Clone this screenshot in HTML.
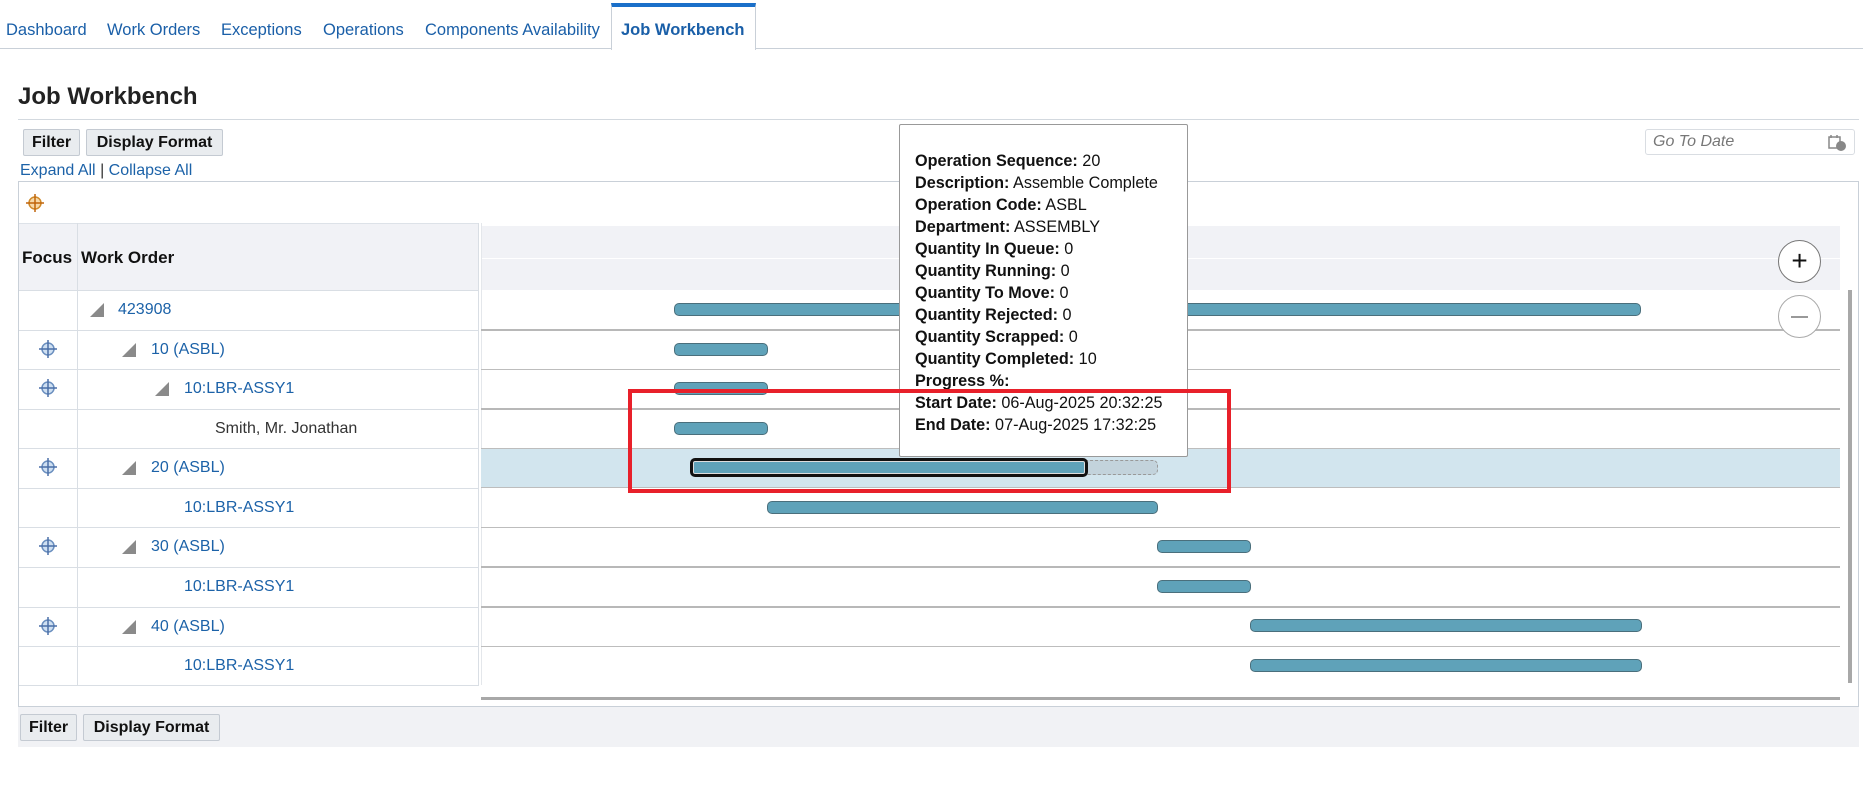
<!DOCTYPE html>
<html><head><meta charset="utf-8"><style>
*{margin:0;padding:0;box-sizing:border-box}
body{width:1863px;height:786px;background:#fff;font-family:"Liberation Sans",Arial,sans-serif;position:relative;overflow:hidden;color:#111}
.a{position:absolute}
.tab{position:absolute;top:21px;font-size:16.5px;color:#1a5fa8;white-space:nowrap}
.btn{position:absolute;background:#e9ecef;border:1px solid #c4cad2;border-radius:2px;font-weight:bold;font-size:16px;text-align:center;line-height:25px;color:#111;padding:0 8px;white-space:nowrap}
.lnk{color:#1c62a8;font-size:16px;position:absolute;white-space:nowrap}
.bar{position:absolute;height:13px;background:#5fa2b9;border:1px solid #4a6f7c;border-radius:5px}
.tip div{font-size:16.2px;line-height:22px;white-space:nowrap}
.tip b{font-weight:bold}
.tri{position:absolute;width:0;height:0;border-left:14px solid transparent;border-bottom:14px solid #8a8a8a}
</style></head><body>
<div class="tab" style="left:6px">Dashboard</div>
<div class="tab" style="left:107px">Work Orders</div>
<div class="tab" style="left:221px">Exceptions</div>
<div class="tab" style="left:323px">Operations</div>
<div class="tab" style="left:425px">Components Availability</div>
<div class="a" style="left:0;top:48px;width:1863px;height:1px;background:#c9d0d8"></div>
<div class="a" style="left:611px;top:3px;width:145px;height:47px;background:#fff;border-left:1px solid #c9d0d8;border-right:1px solid #c9d0d8;border-top:4px solid #1a6fc9"></div>
<div class="tab" style="left:621px;font-weight:bold;color:#1a5fa8">Job Workbench</div>

<div class="a" style="left:18px;top:83px;font-size:24px;font-weight:bold;color:#222">Job Workbench</div>
<div class="a" style="left:18px;top:119px;width:1841px;height:1px;background:#d3d9df"></div>
<div class="btn" style="left:23px;top:129px;width:57px">Filter</div>
<div class="btn" style="left:86px;top:129px;width:137px">Display Format</div>
<div class="lnk" style="left:20px;top:162px;font-size:16px">Expand All <span style="color:#333">|</span> Collapse All</div>
<div class="a" style="left:1645px;top:129px;width:210px;height:26px;border:1px solid #d9dde2;border-radius:3px"></div>
<div class="a" style="left:1653px;top:133px;font-size:16px;font-style:italic;color:#777">Go To Date</div>
<svg class="a" style="left:1828px;top:134px" width="20" height="18"><rect x="1" y="3" width="11" height="11" fill="none" stroke="#888" stroke-width="1.5"/><circle cx="13" cy="12" r="5" fill="#888"/><line x1="3" y1="1" x2="3" y2="4" stroke="#888" stroke-width="1.5"/><line x1="9" y1="1" x2="9" y2="4" stroke="#888" stroke-width="1.5"/></svg>

<div class="a" style="left:18px;top:181px;width:1841px;height:526px;border:1px solid #c9d0d8"></div>
<svg class="a" style="left:26px;top:194px" width="18" height="18"><circle cx="9" cy="9" r="6" fill="#f7d9a8" stroke="#d08a2a" stroke-width="1.5"/><line x1="9" y1="0" x2="9" y2="18" stroke="#c0640a" stroke-width="1.5"/><line x1="0" y1="9" x2="18" y2="9" stroke="#c0640a" stroke-width="1.5"/></svg>

<div class="a" style="left:19px;top:223px;width:460px;height:67px;background:#f1f2f6;border-top:1px solid #dde2e8"></div>
<div class="a" style="left:22px;top:248px;font-size:17px;font-weight:bold">Focus</div>
<div class="a" style="left:81px;top:248px;font-size:17px;font-weight:bold">Work Order</div>
<div class="a" style="left:481px;top:226px;width:1359px;height:64px;background:#f1f2f6"></div>
<div class="a" style="left:481px;top:258px;width:1359px;height:1px;background:#fff"></div>
<div class="a" style="left:77px;top:223px;width:1px;height:462px;background:#d9dee4"></div>
<div class="a" style="left:478px;top:223px;width:1px;height:462px;background:#d9dee4"></div>
<div class="a" style="left:481px;top:223px;width:1px;height:462px;background:#e4e7eb"></div>

<div class="a" style="left:481px;top:448px;width:1359px;height:40px;background:#d2e5ee"></div>

<div class="a" style="left:19px;top:290px;width:460px;height:1px;background:#d9dee4"></div>
<div class="a" style="left:19px;top:330px;width:460px;height:1px;background:#d9dee4"></div>
<div class="a" style="left:19px;top:369px;width:460px;height:1px;background:#d9dee4"></div>
<div class="a" style="left:19px;top:409px;width:460px;height:1px;background:#d9dee4"></div>
<div class="a" style="left:19px;top:448px;width:460px;height:1px;background:#d9dee4"></div>
<div class="a" style="left:19px;top:488px;width:460px;height:1px;background:#d9dee4"></div>
<div class="a" style="left:19px;top:527px;width:460px;height:1px;background:#d9dee4"></div>
<div class="a" style="left:19px;top:567px;width:460px;height:1px;background:#d9dee4"></div>
<div class="a" style="left:19px;top:607px;width:460px;height:1px;background:#d9dee4"></div>
<div class="a" style="left:19px;top:646px;width:460px;height:1px;background:#d9dee4"></div>
<div class="a" style="left:19px;top:685px;width:460px;height:1px;background:#d9dee4"></div>

<div class="a" style="left:481px;top:329px;width:1359px;height:2px;background:#b8b8b8"></div>
<div class="a" style="left:481px;top:369px;width:1359px;height:1px;background:#bdbdbd"></div>
<div class="a" style="left:481px;top:408px;width:1359px;height:2px;background:#b8b8b8"></div>
<div class="a" style="left:481px;top:448px;width:1359px;height:1px;background:#bdbdbd"></div>
<div class="a" style="left:481px;top:487px;width:1359px;height:1px;background:#bdbdbd"></div>
<div class="a" style="left:481px;top:527px;width:1359px;height:1px;background:#bdbdbd"></div>
<div class="a" style="left:481px;top:566px;width:1359px;height:2px;background:#b8b8b8"></div>
<div class="a" style="left:481px;top:606px;width:1359px;height:2px;background:#b8b8b8"></div>
<div class="a" style="left:481px;top:646px;width:1359px;height:1px;background:#bdbdbd"></div>
<div class="a" style="left:481px;top:697px;width:1359px;height:3px;background:#a8a8a8"></div>
<div class="a" style="left:1848px;top:290px;width:4px;height:393px;background:#a8a8a8"></div>

<div class="tri" style="left:90px;top:303px"></div><div class="lnk" style="left:118px;top:301px">423908</div>
<div class="tri" style="left:122px;top:343px"></div><div class="lnk" style="left:151px;top:341px">10 (ASBL)</div>
<div class="tri" style="left:155px;top:382px"></div><div class="lnk" style="left:184px;top:380px">10:LBR-ASSY1</div>
<div class="a" style="left:215px;top:420px;font-size:16px;color:#333">Smith, Mr. Jonathan</div>
<div class="tri" style="left:122px;top:461px"></div><div class="lnk" style="left:151px;top:459px">20 (ASBL)</div>
<div class="lnk" style="left:184px;top:499px">10:LBR-ASSY1</div>
<div class="tri" style="left:122px;top:540px"></div><div class="lnk" style="left:151px;top:538px">30 (ASBL)</div>
<div class="lnk" style="left:184px;top:578px">10:LBR-ASSY1</div>
<div class="tri" style="left:122px;top:620px"></div><div class="lnk" style="left:151px;top:618px">40 (ASBL)</div>
<div class="lnk" style="left:184px;top:657px">10:LBR-ASSY1</div>

<svg class="a" style="left:39px;top:340px" width="18" height="18"><circle cx="9" cy="9" r="6" fill="#cfe0f2" stroke="#6b8fbf" stroke-width="1.5"/><line x1="9" y1="0" x2="9" y2="18" stroke="#4a6fa8" stroke-width="1.5"/><line x1="0" y1="9" x2="18" y2="9" stroke="#4a6fa8" stroke-width="1.5"/></svg>
<svg class="a" style="left:39px;top:379px" width="18" height="18"><circle cx="9" cy="9" r="6" fill="#cfe0f2" stroke="#6b8fbf" stroke-width="1.5"/><line x1="9" y1="0" x2="9" y2="18" stroke="#4a6fa8" stroke-width="1.5"/><line x1="0" y1="9" x2="18" y2="9" stroke="#4a6fa8" stroke-width="1.5"/></svg>
<svg class="a" style="left:39px;top:458px" width="18" height="18"><circle cx="9" cy="9" r="6" fill="#cfe0f2" stroke="#6b8fbf" stroke-width="1.5"/><line x1="9" y1="0" x2="9" y2="18" stroke="#4a6fa8" stroke-width="1.5"/><line x1="0" y1="9" x2="18" y2="9" stroke="#4a6fa8" stroke-width="1.5"/></svg>
<svg class="a" style="left:39px;top:537px" width="18" height="18"><circle cx="9" cy="9" r="6" fill="#cfe0f2" stroke="#6b8fbf" stroke-width="1.5"/><line x1="9" y1="0" x2="9" y2="18" stroke="#4a6fa8" stroke-width="1.5"/><line x1="0" y1="9" x2="18" y2="9" stroke="#4a6fa8" stroke-width="1.5"/></svg>
<svg class="a" style="left:39px;top:617px" width="18" height="18"><circle cx="9" cy="9" r="6" fill="#cfe0f2" stroke="#6b8fbf" stroke-width="1.5"/><line x1="9" y1="0" x2="9" y2="18" stroke="#4a6fa8" stroke-width="1.5"/><line x1="0" y1="9" x2="18" y2="9" stroke="#4a6fa8" stroke-width="1.5"/></svg>

<div class="bar" style="left:674px;top:303px;width:967px"></div>
<div class="bar" style="left:674px;top:343px;width:94px"></div>
<div class="bar" style="left:674px;top:382px;width:94px"></div>
<div class="bar" style="left:674px;top:422px;width:94px"></div>
<div class="a" style="left:1080px;top:460px;width:78px;height:15px;border:1px dashed #999;border-radius:5px;background:#c3d3dc"></div>
<div class="bar" style="left:690px;top:458px;width:398px;height:19px;border:3px solid #111;box-shadow:inset 0 0 0 1px #ddd"></div>
<div class="bar" style="left:767px;top:501px;width:391px"></div>
<div class="bar" style="left:1157px;top:540px;width:94px"></div>
<div class="bar" style="left:1157px;top:580px;width:94px"></div>
<div class="bar" style="left:1250px;top:619px;width:392px"></div>
<div class="bar" style="left:1250px;top:659px;width:392px"></div>

<div class="a" style="left:1778px;top:240px;width:43px;height:43px;border:1.5px solid #777;border-radius:50%;background:#fff;text-align:center;line-height:40px;font-size:28px;color:#111">+</div>
<div class="a" style="left:1778px;top:295px;width:43px;height:43px;border:1.5px solid #aaa;border-radius:50%;background:#fff"></div>
<div class="a" style="left:1791px;top:316px;width:17px;height:2px;background:#999"></div>

<div class="a tip" style="left:899px;top:124px;width:289px;height:333px;background:#fff;border:1px solid #999;border-radius:2px;padding:25px 0 0 15px">
<div><b>Operation Sequence:</b> 20</div>
<div><b>Description:</b> Assemble Complete</div>
<div><b>Operation Code:</b> ASBL</div>
<div><b>Department:</b> ASSEMBLY</div>
<div><b>Quantity In Queue:</b> 0</div>
<div><b>Quantity Running:</b> 0</div>
<div><b>Quantity To Move:</b> 0</div>
<div><b>Quantity Rejected:</b> 0</div>
<div><b>Quantity Scrapped:</b> 0</div>
<div><b>Quantity Completed:</b> 10</div>
<div><b>Progress %:</b></div>
<div><b>Start Date:</b> 06-Aug-2025 20:32:25</div>
<div><b>End Date:</b> 07-Aug-2025 17:32:25</div>
</div>

<div class="a" style="left:628px;top:389px;width:603px;height:104px;border:4px solid #e8202a"></div>

<div class="a" style="left:18px;top:707px;width:1841px;height:40px;background:#f1f2f5"></div>
<div class="btn" style="left:20px;top:714px;width:57px">Filter</div>
<div class="btn" style="left:83px;top:714px;width:137px">Display Format</div>
</body></html>
